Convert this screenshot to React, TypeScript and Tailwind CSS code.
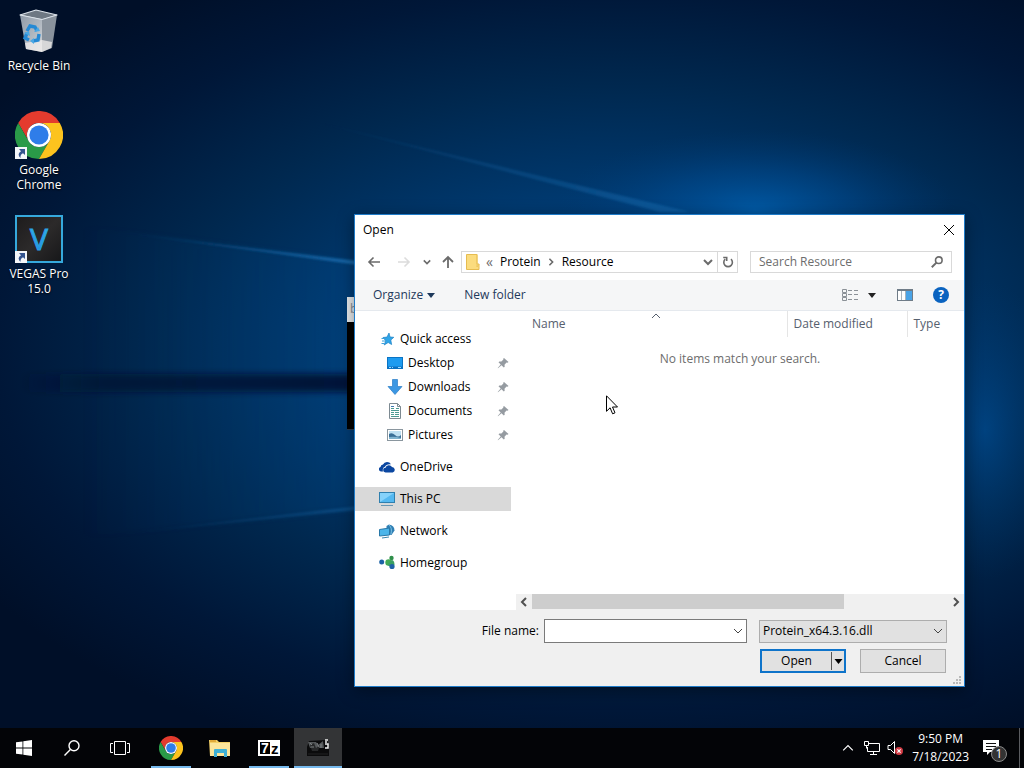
import { useState } from "react";
import type { ReactNode } from "react";

type IconProps = { className?: string };

function Wallpaper() {
  return (
    <svg
      className="absolute inset-0 h-full w-full"
      viewBox="0 0 1024 728"
      preserveAspectRatio="none"
      aria-hidden="true"
    >
      <defs>
        <radialGradient id="base" gradientUnits="userSpaceOnUse" cx="0" cy="0" r="1" gradientTransform="translate(620 350) scale(760 440)">
          <stop offset="0" stopColor="#004588" />
          <stop offset="0.35" stopColor="#00396f" />
          <stop offset="0.6" stopColor="#00284f" />
          <stop offset="0.82" stopColor="#001738" />
          <stop offset="1" stopColor="#000f28" />
        </radialGradient>
        <radialGradient id="glow" gradientUnits="userSpaceOnUse" cx="0" cy="0" r="1" gradientTransform="translate(755 210) scale(200 80)">
          <stop offset="0" stopColor="#0060b0" stopOpacity="0.8" />
          <stop offset="0.5" stopColor="#00509a" stopOpacity="0.4" />
          <stop offset="1" stopColor="#003a74" stopOpacity="0" />
        </radialGradient>
        <radialGradient id="right" gradientUnits="userSpaceOnUse" cx="0" cy="0" r="1" gradientTransform="translate(985 430) scale(80 150)">
          <stop offset="0" stopColor="#0056a4" stopOpacity="0.5" />
          <stop offset="1" stopColor="#003a74" stopOpacity="0" />
        </radialGradient>
        <linearGradient id="beam" x1="0" x2="1">
          <stop offset="0" stopColor="#004c8c" stopOpacity="0" />
          <stop offset="1" stopColor="#005299" stopOpacity="0.5" />
        </linearGradient>
        <linearGradient id="edge" x1="0" x2="1">
          <stop offset="0" stopColor="#1a70b4" stopOpacity="0" />
          <stop offset="1" stopColor="#1a70b4" stopOpacity="0.8" />
        </linearGradient>
        <linearGradient id="band" x1="0" x2="1">
          <stop offset="0" stopColor="#001230" stopOpacity="0" />
          <stop offset="0.25" stopColor="#001230" stopOpacity="0.65" />
          <stop offset="1" stopColor="#001230" stopOpacity="0.9" />
        </linearGradient>
        <filter id="soft" x="-10%" y="-50%" width="120%" height="200%">
          <feGaussianBlur stdDeviation="3" />
        </filter>
        <filter id="thin" x="-10%" y="-50%" width="120%" height="200%">
          <feGaussianBlur stdDeviation="1" />
        </filter>
      </defs>
      <rect width="1024" height="728" fill="url(#base)" />
      <rect width="1024" height="728" fill="url(#glow)" />
      <rect width="1024" height="728" fill="url(#right)" />
      <path d="M80 226 360 263V508L80 537z" fill="url(#beam)" opacity="0.5" filter="url(#soft)" />
      <path d="M300 118 690 212 660 212z" fill="url(#edge)" opacity="0.6" filter="url(#thin)" />
      <path d="M110 231 358 261V265z" fill="url(#edge)" filter="url(#thin)" />
      <path d="M110 535 358 506V510z" fill="url(#edge)" opacity="0.45" filter="url(#thin)" />
      <rect x="20" y="374" width="340" height="18" fill="url(#band)" filter="url(#soft)" />
    </svg>
  );
}

function ChromeIcon({ className }: IconProps) {
  return (
    <svg className={className} viewBox="0 0 48 48" aria-hidden="true">
      <path d="M24 12H44.8A24 24 0 0 0 3.2 12L13.6 30A12 12 0 0 1 24 12z" fill="#e33b2e" />
      <path d="M13.6 30 3.2 12A24 24 0 0 0 24 48L34.4 30A12 12 0 0 1 13.6 30z" fill="#2a9a48" />
      <path d="M34.4 30 24 48A24 24 0 0 0 44.8 12H24A12 12 0 0 1 34.4 30z" fill="#fcc31e" />
      <circle cx="24" cy="24" r="12" fill="#fff" />
      <circle cx="24" cy="24" r="9.6" fill="#2f7de9" />
    </svg>
  );
}

function RecycleBinIcon() {
  return (
    <svg className="size-12" viewBox="0 0 48 48" aria-hidden="true">
      <defs>
        <linearGradient id="binFront" x1="0" y1="0" x2="1" y2="1">
          <stop offset="0" stopColor="#8f9aa8" />
          <stop offset="0.6" stopColor="#b3bac2" />
          <stop offset="1" stopColor="#d5d9dc" />
        </linearGradient>
      </defs>
      <path d="M5 8 21 3l21 5-15 5z" fill="#6e7883" stroke="#dce3ea" strokeWidth="1.2" strokeLinejoin="round" />
      <path d="M5 8 27 12 27 45 11 42z" fill="url(#binFront)" />
      <path d="M27 12 42 8 37 41 27 45z" fill="#89929c" />
      <path d="M5 8 27 12.500 42 8" fill="none" stroke="#dce3ea" />
      <path d="M10 36 27 33 37 35 36 41 27 45 11 42z" fill="#f1eeec" opacity="0.75" />
      <g fill="none" stroke="#2589d4" strokeWidth="3.4">
        <path d="m12 24 3-5 5 1 2 4" />
        <path d="m24 27-1 6-5 1" />
        <path d="m14 33-4-2 2-5" />
      </g>
      <path d="m19 25 6-1-2-4zM19 31v6l-4-3zM9 26l5-2 1 5z" fill="#4aa7e4" />
    </svg>
  );
}

function VegasIcon() {
  return (
    <svg className="size-12" viewBox="0 0 48 48" aria-hidden="true">
      <defs>
        <linearGradient id="vegasBg" x1="0" y1="0" x2="1" y2="1">
          <stop offset="0" stopColor="#1d1b1c" />
          <stop offset="0.5" stopColor="#2c2a2a" />
          <stop offset="1" stopColor="#161719" />
        </linearGradient>
        <linearGradient id="vegasV" x1="0" y1="0" x2="0" y2="1">
          <stop offset="0" stopColor="#39c0ee" />
          <stop offset="1" stopColor="#1a86dc" />
        </linearGradient>
      </defs>
      <rect x="1" y="1" width="46" height="46" fill="url(#vegasBg)" stroke="#36a9dc" strokeWidth="2" />
      <text x="24" y="35" textAnchor="middle" fontFamily="Open Sans" fontSize="30" fill="url(#vegasV)" stroke="#2aa0e4">
        V
      </text>
    </svg>
  );
}

function ShortcutArrow() {
  return (
    <svg className="absolute bottom-0 left-0 size-3" viewBox="0 0 12 12" aria-hidden="true">
      <rect width="12" height="12" fill="#f4f6f9" />
      <path d="M4 2h6v6L8 6.200Q5 7.500 5.500 11 1.500 7 6 4.200z" fill="#34548f" />
    </svg>
  );
}

type DesktopItemProps = {
  label: string;
  icon: ReactNode;
  shortcut?: boolean;
};

function DesktopItem({ label, icon, shortcut }: DesktopItemProps) {
  return (
    <button className="flex h-26 w-full flex-col items-center pt-[7px]">
      <span className="relative block size-12">
        {icon}
        {shortcut && <ShortcutArrow />}
      </span>
      <span className="mt-[3px] px-1 text-center text-xs leading-[15px] text-white [text-shadow:0_1px_2px_#000]">
        {label}
      </span>
    </button>
  );
}

function Chevron({ className }: IconProps) {
  return (
    <svg className={className} viewBox="0 0 10 10" fill="none" stroke="currentColor" aria-hidden="true">
      <path d="m1 3 4 4 4-4" />
    </svg>
  );
}

function Triangle({ className }: IconProps) {
  return (
    <svg className={className} viewBox="0 0 8 5" fill="currentColor" aria-hidden="true">
      <path d="M0 0h8L4 5z" />
    </svg>
  );
}

function PinIcon() {
  return (
    <svg className="mr-[2px] ml-auto size-3" viewBox="0 0 12 12" aria-hidden="true">
      <path d="m7 1 4.500 4-1 .8-1-.2L7.500 7.700l.2 2-.9.800L4.500 8.300 1 11.300.7 11l3-3.500L1.500 5.300l.9-.8 2 .1 2-2L6.200 1.700z" fill="#959ba1" />
    </svg>
  );
}

function StarIcon() {
  return (
    <svg className="size-4" viewBox="0 0 16 16" aria-hidden="true">
      <path d="m10 2 1 4 3.800.3-3 2.700.8 4.500-3.400-2-4 2.500 1.500-4.300L4 6.500l4-.4z" fill="#2fa5e8" stroke="#1a7fc4" strokeWidth="0.7" />
      <path d="M2.500 7.500h4M3 10h3.500M2.500 12.500h3" stroke="#3b9fda" />
    </svg>
  );
}

function DesktopIcon() {
  return (
    <svg className="size-4" viewBox="0 0 16 16" aria-hidden="true">
      <rect x="0.500" y="2.500" width="15" height="11" fill="#1d9bf0" stroke="#0a74c4" />
      <path d="M1 11.500h14v2H1z" fill="#0a6fc0" />
      <path d="M2 12.500h2m1 0h1m5 0h3" stroke="#9ad8ff" />
    </svg>
  );
}

function DownloadIcon() {
  return (
    <svg className="size-4" viewBox="0 0 16 16" aria-hidden="true">
      <path d="M5.500.5h5v7h4.500L8 15.500 1 7.500h4.500z" fill="#3b97e3" stroke="#2a7cc6" strokeWidth="0.7" />
    </svg>
  );
}

function DocumentIcon() {
  return (
    <svg className="size-4" viewBox="0 0 16 16" aria-hidden="true">
      <path d="M2.500.5h8l3 3v12h-11z" fill="#fff" stroke="#7d8a92" />
      <path d="M10.500.5v3h3" fill="none" stroke="#7d8a92" />
      <path d="M4 5.500h3m2 0h3M4 7.500h8M4 9.500h3m1 0h4M4 11.500h3m1 0h4M4 13.500h8" stroke="#4c9a93" />
      <path d="M4 3.500h3" stroke="#3c78b4" />
    </svg>
  );
}

function PictureIcon() {
  return (
    <svg className="size-4" viewBox="0 0 16 16" aria-hidden="true">
      <rect x="0.500" y="2.500" width="15" height="11" fill="#fff" stroke="#8a969e" />
      <path d="M2 4h12v8H2z" fill="#bfe0f2" />
      <path d="M2 7q3-2 6 1t6 0v4H2z" fill="#3a6f97" />
      <path d="M2 10q6-1 12 1v1H2z" fill="#7fb3cf" />
    </svg>
  );
}

function OneDriveIcon() {
  return (
    <svg className="size-4" viewBox="0 0 16 16" aria-hidden="true">
      <path d="M4 12.500H2A2.300 2.300 0 0 1 1.500 8 3 3 0 0 1 4 5.500 4.500 4.500 0 0 1 12 5.200q-5-.5-6 2.600Q3 8.500 4 12.500z" fill="#0b47a1" />
      <path d="M6.500 13.500a2.400 2.400 0 0 1 0-4.800A3.600 3.600 0 0 1 13 8a2.800 2.800 0 0 1 .7 5.500z" fill="#0b47a1" />
    </svg>
  );
}

function ComputerIcon() {
  return (
    <svg className="size-4" viewBox="0 0 16 16" aria-hidden="true">
      <rect x="0.500" y="1.500" width="15" height="10" fill="#54b8f0" stroke="#2f7fae" />
      <path d="M1 2h14L1 11z" fill="#86d2fa" />
      <path d="M2 14.500h12" stroke="#6796b3" />
      <path d="M5 12.500h6" stroke="#c8d7df" />
    </svg>
  );
}

function NetworkIcon() {
  return (
    <svg className="size-4" viewBox="0 0 16 16" aria-hidden="true">
      <path d="M10 1.500q5.500 1 5.500 6l-3 4.500-5-1V3z" fill="#2f7fb4" />
      <path d="M10 2q3.500 3 2 9" fill="none" stroke="#7cc0e2" />
      <path d="m.5 6.500 10-1.500v7L.5 13z" fill="#4bb5ea" stroke="#2878a8" />
      <path d="M3 15 10 14" stroke="#3e86ae" />
    </svg>
  );
}

function HomegroupIcon() {
  return (
    <svg className="size-4" viewBox="0 0 16 16" aria-hidden="true">
      <circle cx="2.700" cy="7" r="2.500" fill="#1b62a6" />
      <circle cx="12.500" cy="3" r="2.200" fill="#2f8f4a" />
      <circle cx="9.500" cy="7.500" r="3.200" fill="#43ab55" />
      <path d="M12.500 5q3 0 3 5l-2 3-5-3z" fill="#3ba063" />
      <circle cx="13" cy="11.500" r="2.600" fill="#1f62a8" />
    </svg>
  );
}

type Place = {
  label: string;
  icon: ReactNode;
  nested?: boolean;
};

const places: Place[][] = [
  [
    { label: "Quick access", icon: <StarIcon /> },
    { label: "Desktop", icon: <DesktopIcon />, nested: true },
    { label: "Downloads", icon: <DownloadIcon />, nested: true },
    { label: "Documents", icon: <DocumentIcon />, nested: true },
    { label: "Pictures", icon: <PictureIcon />, nested: true },
  ],
  [{ label: "OneDrive", icon: <OneDriveIcon /> }],
  [{ label: "This PC", icon: <ComputerIcon /> }],
  [{ label: "Network", icon: <NetworkIcon /> }],
  [{ label: "Homegroup", icon: <HomegroupIcon /> }],
];

function Sidebar() {
  const [selected, setSelected] = useState("This PC");

  return (
    <nav className="flex w-[161px] shrink-0 flex-col gap-2 bg-white pt-4 pr-[5px]">
      {places.map((group) => (
        <ul key={group[0].label}>
          {group.map((place) => (
            <li key={place.label}>
              <button
                onClick={() => setSelected(place.label)}
                className={`flex h-6 w-full items-center gap-[5px] ${
                  place.nested ? "pl-8" : "pl-6"
                } ${selected === place.label ? "bg-[#d9d9d9]" : ""}`}
              >
                {place.icon}
                {place.label}
                {place.nested && <PinIcon />}
              </button>
            </li>
          ))}
        </ul>
      ))}
    </nav>
  );
}

function AddressBar() {
  return (
    <div className="flex h-[35px] items-center pr-3 pb-px pl-3 text-[#6b6b6b]">
      <button aria-label="Back">
        <svg className="size-[14px]" viewBox="0 0 14 14" fill="none" stroke="currentColor" strokeWidth="1.600">
          <path d="M13 7H2M6.500 2.500 2 7l4.500 4.500" />
        </svg>
      </button>
      <button aria-label="Forward" className="ml-4 text-[#dcdcdc]">
        <svg className="size-[14px]" viewBox="0 0 14 14" fill="none" stroke="currentColor" strokeWidth="1.600">
          <path d="M1 7h11M7.500 2.500 12 7l-4.500 4.500" />
        </svg>
      </button>
      <button aria-label="Recent locations" className="ml-3">
        <Chevron className="size-2 stroke-2" />
      </button>
      <button aria-label="Up" className="ml-[10px]">
        <svg className="size-[14px]" viewBox="0 0 14 14" fill="none" stroke="currentColor" strokeWidth="1.800">
          <path d="M7 13V2M2 7l5-5 5 5" />
        </svg>
      </button>
      <div className="ml-[6px] flex h-[22px] w-[277px] items-center border border-[#d9d9d9] pl-1">
        <svg className="h-4 w-[14px]" viewBox="0 0 14 16" aria-hidden="true">
          <path d="M.5.500h10.500v9.500h2v5.500H.5z" fill="#fbdc7e" stroke="#e6bc50" />
          <path d="M11 .5V13l2-3" fill="none" stroke="#edc75f" />
        </svg>
        <span className="ml-[6px] text-sm leading-4">«</span>
        <button className="ml-[7px] text-black">Protein</button>
        <Chevron className="ml-[6px] size-2 -rotate-90 stroke-2" />
        <button className="ml-[7px] text-black">Resource</button>
        <button aria-label="Previous locations" className="mr-1 ml-auto">
          <Chevron className="size-[10px] stroke-2" />
        </button>
        <button aria-label="Refresh" className="flex h-full w-5 items-center justify-center border-l border-[#d9d9d9]">
          <svg className="size-3" viewBox="0 0 12 12" fill="none" stroke="currentColor" strokeWidth="1.600">
            <path d="M9 3.200A4.300 4.300 0 1 1 3.200 3.200" />
            <path d="M1.200 1.500h3.500v3.500" />
          </svg>
        </button>
      </div>
      <label className="ml-3 flex h-[22px] flex-1 items-center border border-[#d9d9d9] pr-2 pl-2">
        <input
          type="search"
          aria-label="Search Resource"
          placeholder="Search Resource"
          className="w-full min-w-0 text-black outline-none placeholder:text-[#6d6d6d]"
        />
        <svg className="size-3 shrink-0" viewBox="0 0 12 12" fill="none" stroke="currentColor" strokeWidth="1.600" aria-hidden="true">
          <circle cx="7.800" cy="4.200" r="3.300" />
          <path d="M5.400 6.600.8 11.200" strokeWidth="2" />
        </svg>
      </label>
    </div>
  );
}

function Toolbar() {
  return (
    <div className="flex h-[31px] items-center border-b border-[#e5e9ee] bg-[#f5f6f7] pr-[15px] pl-[18px] text-[#1e395b]">
      <button className="flex items-center gap-1">
        Organize
        <Triangle className="h-[5px] w-2" />
      </button>
      <button className="ml-[29px]">New folder</button>
      <button aria-label="Change your view" className="ml-auto flex items-center gap-[9px]">
        <svg className="h-3 w-[17px]" viewBox="0 0 17 12" fill="none" stroke="#8b9197" aria-hidden="true">
          <path d="M.5.500h4v3h-4zM.5 4.500h4v3h-4zM.5 8.500h4v3h-4z" />
          <path d="M6 1.500h4m2 0h4M6 5.500h4m2 0h4M6 10.500h4m2 0h4" />
        </svg>
        <Triangle className="h-[5px] w-2 text-[#222]" />
      </button>
      <button aria-label="Show the preview pane" className="ml-[21px]">
        <svg className="h-3 w-4" viewBox="0 0 16 12" aria-hidden="true">
          <rect x="0.500" y="0.500" width="15" height="11" fill="#fff" stroke="#6f7c88" />
          <path d="M1 1.500h14" stroke="#6f7c88" />
          <path d="M9 2h6v9H9z" fill="#4aa3e6" />
          <path d="M4.500 2v9M8.500 2v9" stroke="#a9b3bc" />
        </svg>
      </button>
      <button
        aria-label="Get help"
        className="ml-5 flex size-4 items-center justify-center rounded-full bg-[#0a63c0] font-bold text-white"
      >
        ?
      </button>
    </div>
  );
}

function FileList() {
  return (
    <div className="flex min-w-0 flex-1 flex-col">
      <table className="w-full table-fixed text-left">
        <thead className="text-[#56606e]">
          <tr className="h-[26px]">
            <th className="relative w-[271px] border-r border-[#e5e5e5] pl-4 font-normal">
              Name
              <Chevron className="absolute top-0 left-[135px] size-[10px] rotate-180" />
            </th>
            <th className="w-[120px] border-r border-[#e5e5e5] pl-[6px] font-normal">Date modified</th>
            <th className="pl-[6px] font-normal">Type</th>
          </tr>
        </thead>
        <tbody>
          <tr>
            <td colSpan={3} className="pt-[14px] text-center text-[#6d6d6d]">
              No items match your search.
            </td>
          </tr>
        </tbody>
      </table>
      <div className="mt-auto flex h-4 items-center bg-[#f0f0f0] text-[#505050]">
        <button aria-label="Scroll left" className="flex w-4 justify-center">
          <Chevron className="size-[10px] rotate-90 stroke-2" />
        </button>
        <div className="flex h-full flex-1">
          <div className="h-[15px] w-3/4 bg-[#cdcdcd]" />
        </div>
        <button aria-label="Scroll right" className="flex w-4 justify-center">
          <Chevron className="size-[10px] -rotate-90 stroke-2" />
        </button>
      </div>
    </div>
  );
}

function DialogFooter() {
  return (
    <div className="relative flex flex-1 flex-col items-end gap-[6px] bg-[#f0f0f0] pt-[9px] pr-[17px]">
      <div className="flex items-center">
        <label htmlFor="file-name">File name:</label>
        <div className="ml-[5px] flex h-6 w-[203px] items-center border border-[#7a7a7a] bg-white pr-[3px]">
          <input id="file-name" type="text" className="h-full min-w-0 flex-1 px-1 outline-none" />
          <Chevron className="size-[10px] text-[#444]" />
        </div>
        <div className="relative ml-3 flex h-6 w-[188px] items-center">
          <select
            aria-label="File type"
            className="h-[23px] w-full appearance-none border border-[#adadad] bg-[#e1e1e1] pl-[3px] outline-none"
          >
            <option>Protein_x64.3.16.dll</option>
          </select>
          <Chevron className="pointer-events-none absolute right-1 size-[10px] text-[#444]" />
        </div>
      </div>
      <div className="flex gap-[14px] pr-px">
        <div className="flex h-6 w-[86px] items-center border-2 border-[#0f74ca] bg-[#e1e1e1]">
          <button className="h-full flex-1">Open</button>
          <button aria-label="More open options" className="flex h-[18px] w-[13px] items-center justify-center border-l border-[#555]">
            <Triangle className="h-[5px] w-[9px]" />
          </button>
        </div>
        <button className="h-6 w-[86px] border border-[#adadad] bg-[#e1e1e1]">Cancel</button>
      </div>
      <svg className="absolute right-[3px] bottom-[2px] size-2" viewBox="0 0 8 8" fill="#b9b9b9" aria-hidden="true">
        <path d="M6 0h2v2H6zM3 3h2v2H3zM6 3h2v2H6zM0 6h2v2H0zM3 6h2v2H3zM6 6h2v2H6z" />
      </svg>
    </div>
  );
}

function OpenDialog() {
  return (
    <section
      aria-label="Open"
      className="absolute top-[214px] left-[354px] flex h-[473px] w-[611px] flex-col border border-[#1f7bc8] bg-white text-xs text-black shadow-[0_4px_16px_rgba(0,0,0,0.4)]"
    >
      <header className="flex h-[30px] items-center justify-between pr-[10px] pl-2">
        <h1>Open</h1>
        <button aria-label="Close">
          <svg className="size-[10px]" viewBox="0 0 10 10" stroke="currentColor">
            <path d="m0 0 10 10M10 0 0 10" />
          </svg>
        </button>
      </header>
      <AddressBar />
      <Toolbar />
      <div className="flex h-[299px]">
        <Sidebar />
        <FileList />
      </div>
      <DialogFooter />
    </section>
  );
}

// Only a sliver of this one shows to the left of the dialog
function BackgroundWindow() {
  return (
    <section className="absolute top-[297px] left-[347px] h-[133px] w-40 border-b border-[#2c3c4c] bg-black">
      <header className="h-[25px] bg-[#e9ecef] pl-[3px] text-xs leading-6 text-[#8a9097]">b</header>
    </section>
  );
}

function Cursor() {
  return (
    <svg className="pointer-events-none absolute top-[395px] left-[606px] h-5 w-3" viewBox="0 0 12 20" aria-hidden="true">
      <path d="M.5.800v15.500l3.600-3.500 2.500 6 2.400-1-2.500-5.800h5z" fill="#fff" stroke="#000" />
    </svg>
  );
}

type TaskProps = {
  label: string;
  state?: "running" | "active";
  children: ReactNode;
};

function Task({ label, state, children }: TaskProps) {
  return (
    <button
      aria-label={label}
      className={`relative flex h-full w-12 items-center justify-center ${
        state === "active" ? "bg-[#333436]" : ""
      }`}
    >
      {children}
      {state && (
        <span
          className={`absolute bottom-0 h-[2px] bg-[#76b9ed] ${
            state === "active" ? "w-full" : "w-10"
          }`}
        />
      )}
    </button>
  );
}

function Taskbar() {
  return (
    <footer className="relative flex h-10 items-center bg-[#030407] text-white">
      <Task label="Start">
        <svg className="size-4" viewBox="0 0 16 16" fill="#fff">
          <path d="M0 2.300 6.500 1.400v6.200H0zM7.300 1.300 16 0v7.600H7.300zM0 8.400h6.500v6.200L0 13.700zM7.300 8.400H16V16l-8.700-1.300z" />
        </svg>
      </Task>
      <Task label="Search">
        <svg className="size-4" viewBox="0 0 16 16" fill="none" stroke="#fff" strokeWidth="1.400">
          <circle cx="10" cy="5.800" r="5" />
          <path d="M6.400 9.400.5 15.400" />
        </svg>
      </Task>
      <Task label="Task View">
        <svg className="h-[14px] w-5" viewBox="0 0 20 14" fill="none" stroke="#fff">
          <path d="M4.500.500h11v13h-11zM3 2.500H.5v9H3M17 2.500h2.500v9H17" />
        </svg>
      </Task>
      <div className="ml-[3px] flex h-full gap-px">
        <Task label="Google Chrome" state="running">
          <ChromeIcon className="size-6" />
        </Task>
        <Task label="File Explorer">
          <svg className="h-[19px] w-[22px]" viewBox="0 0 22 19">
            <path d="M0 1h8l2 2h11v14H1z" fill="#f2cf67" />
            <path d="M1 1h6v2H1z" fill="#e0a938" />
            <path d="M1 4h20v13H1z" fill="#fbe59a" />
            <path d="M5 18v-7q0-1 1-1h11q1 0 1 1v7h-3v-4H8v4z" fill="#3eb0d5" />
            <path d="M8 14h7v2H8z" fill="#fbe59a" />
          </svg>
        </Task>
        <Task label="7-Zip" state="running">
          <svg className="h-4 w-[22px]" viewBox="0 0 22 16">
            <path d="M0 0h22v16H0z" fill="#fff" />
            <path d="M2 2h10v12H2z" fill="#000" />
            <text x="3" y="13" fontFamily="Liberation Sans" fontWeight="700" fontSize="14" fill="#fff">
              7
            </text>
            <text x="13" y="14" fontFamily="Liberation Sans" fontWeight="700" fontSize="15" fill="#000">
              z
            </text>
          </svg>
        </Task>
        <Task label="Keygen" state="active">
          <svg className="h-[18px] w-6" viewBox="0 0 24 18">
            <path d="M1 8 3 2l18-1 2 8v8H1z" fill="#0b0b0c" />
            <path d="M2 3h8l2 3 5-4 1 7H4z" fill="#55585a" />
            <path d="m4 6 4-2 2 5 4-3-2 6H6z" fill="#272829" />
            <path d="M5 8h3M11 4l2 4M15 5v4M4 4l2 2" stroke="#7d8082" />
            <path d="M19 1h3M19 3h2M19 5h3v4h-3" fill="none" stroke="#eee" strokeWidth="1.500" />
            <path d="M2 15h20" stroke="#222" />
          </svg>
        </Task>
      </div>
      <div className="ml-auto flex h-full items-center">
        <button aria-label="Show hidden icons">
          <Chevron className="size-3 rotate-180" />
        </button>
        <button aria-label="Network" className="ml-[10px]">
          <svg className="h-[15px] w-4" viewBox="0 0 16 15" fill="none" stroke="#fff">
            <path d="M5 2.500h10.500v8H3.500V6M9.500 10.500v3M6 13.500h7" />
            <path d="M.5.500h4v4h-4zM2.500 4.500v3" />
          </svg>
        </button>
        <button aria-label="Volume muted" className="ml-[7px]">
          <svg className="h-4 w-[17px]" viewBox="0 0 17 16">
            <path d="M1 5.500h2.500l4-4v12l-4-4H1z" fill="none" stroke="#fff" />
            <circle cx="12" cy="11" r="4" fill="#d13c45" />
            <path d="m10.400 9.400 3.200 3.200M13.600 9.400l-3.200 3.200" stroke="#fff" strokeWidth="1.200" />
          </svg>
        </button>
        <time className="ml-2 text-center text-xs leading-[18px] whitespace-nowrap">
          9:50 PM
          <br />
          7/18/2023
        </time>
        <button aria-label="Notifications" className="relative ml-[14px] h-6 w-6">
          <svg className="absolute top-1 left-0 size-4" viewBox="0 0 16 16">
            <path d="M0 0h16v12H7l-3 3v-3H0z" fill="#fff" />
            <path d="M3 3.500h10M3 6.500h10M3 9.500h6" stroke="#111" />
          </svg>
          <span className="absolute top-[10px] left-2 flex size-4 items-center justify-center rounded-full border border-[#8a8a8a] bg-[#333] text-xs">
            1
          </span>
        </button>
        <button aria-label="Show desktop" className="ml-3 h-full w-[5px] border-l border-[#5a5c60]" />
      </div>
    </footer>
  );
}

export default function App() {
  return (
    <div className="flex h-screen flex-col overflow-hidden bg-[#000c22] font-['Open_Sans','Noto_Sans',sans-serif]">
      <main className="relative flex-1">
        <Wallpaper />
        <div className="relative flex w-[78px] flex-col">
          <DesktopItem label="Recycle Bin" icon={<RecycleBinIcon />} />
          <DesktopItem label="Google Chrome" icon={<ChromeIcon className="size-12" />} shortcut />
          <DesktopItem label="VEGAS Pro 15.0" icon={<VegasIcon />} shortcut />
        </div>
        <BackgroundWindow />
        <OpenDialog />
        <Cursor />
      </main>
      <Taskbar />
    </div>
  );
}
